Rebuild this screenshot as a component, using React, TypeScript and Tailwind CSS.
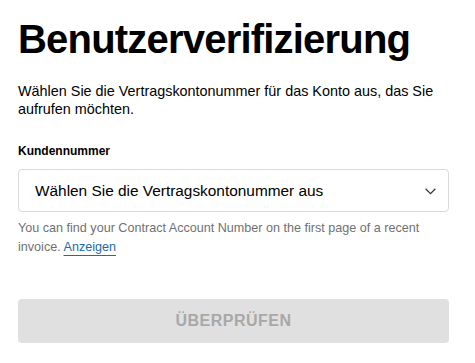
import React from "react";

export default function App() {
  return (
    <div className="w-[475px] h-[363px] bg-white overflow-hidden" style={{ fontFamily: '"Liberation Sans", Arial, sans-serif' }}>
      <div className="ml-[18px] w-[431px] pt-[17px]">
        <h1 className="text-[40px] leading-[44px] font-bold text-black tracking-[-0.8px]">Benutzerverifizierung</h1>
        <p className="mt-[21px] text-[14.4px] leading-[18px] text-black">
          Wählen Sie die Vertragskontonummer für das Konto aus, das Sie aufrufen möchten.
        </p>
        <div className="mt-[25px] text-[12px] leading-[16px] font-bold text-black">Kundennummer</div>
        <div className="mt-[10px] h-[43px] border border-[#d8dada] rounded-[4px] flex items-center justify-between pl-[16px] pr-[12px]">
          <span className="text-[15.4px] text-black">Wählen Sie die Vertragskontonummer aus</span>
          <svg width="11" height="7" viewBox="0 0 11 7" fill="none" className="mt-[2px]">
            <path d="M0.6 0.8 L5.5 5.6 L10.4 0.8" stroke="#333" strokeWidth="1.2" />
          </svg>
        </div>
        <p className="mt-[7px] text-[12.6px] leading-[19px] text-[#6f7171]">
          You can find your Contract Account Number on the first page of a recent invoice.{" "}
          <a className="text-[#1a6bb0] underline decoration-[#1a6bb0] underline-offset-[4px]">Anzeigen</a>
        </p>
        <button className="mt-[42px] w-full h-[44px] rounded-[4px] bg-[#e0e0e0] text-[#a8a8a8] text-[16px] font-bold tracking-[0.5px]">
          ÜBERPRÜFEN
        </button>
      </div>
    </div>
  );
}
